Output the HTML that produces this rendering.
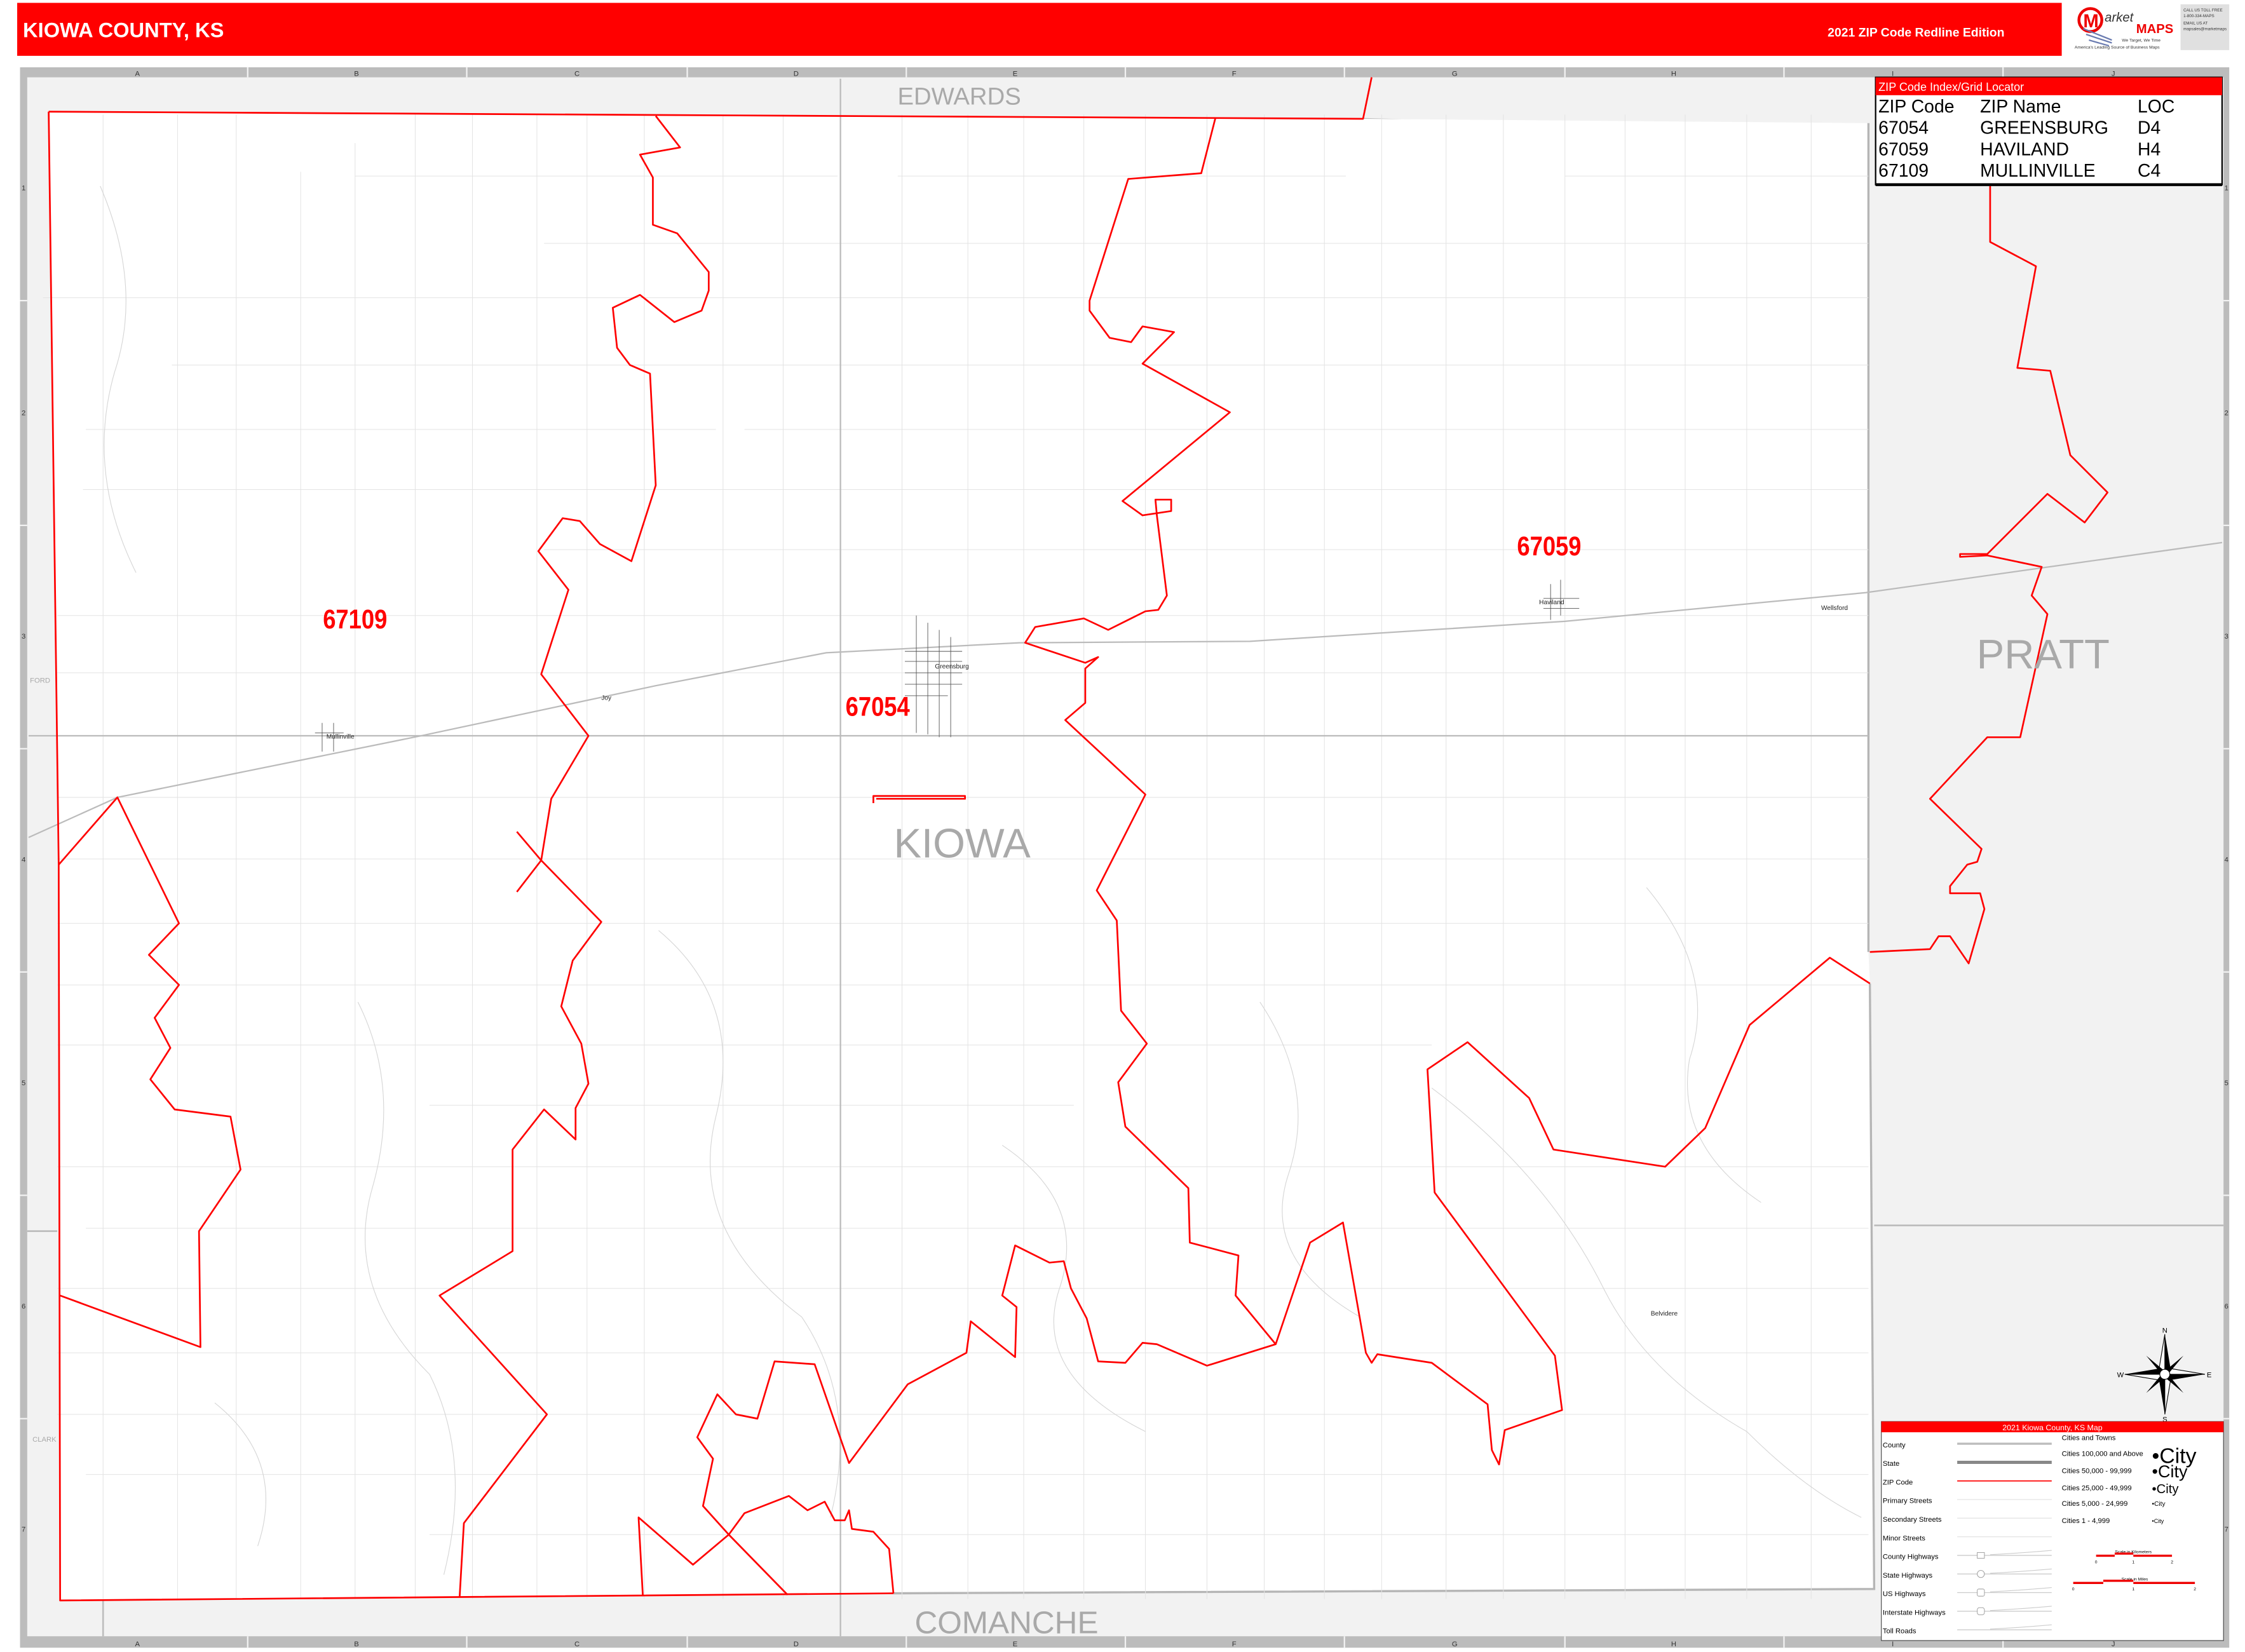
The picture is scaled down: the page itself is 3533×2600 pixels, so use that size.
<!DOCTYPE html>
<html><head><meta charset="utf-8"><style>
html,body{margin:0;padding:0;background:#fff;}
svg{display:block;}
text{font-family:"Liberation Sans",Arial,sans-serif;}
</style></head><body>
<svg width="3533" height="2600" viewBox="0 0 1568 1154" preserveAspectRatio="none" xmlns="http://www.w3.org/2000/svg">
<rect x="0" y="0" width="1568" height="1154" fill="#fff"/>
<rect x="12" y="2" width="1428" height="37" fill="#ff0000"/>
<text x="16" y="26" font-size="14.5" font-weight="bold" fill="#fff">KIOWA COUNTY, KS</text>
<text x="1400" y="25.5" font-size="8.6" font-weight="bold" fill="#fff" text-anchor="end">2021 ZIP Code Redline Edition</text>
<g>
<circle cx="1460" cy="14" r="8" fill="none" stroke="#e00" stroke-width="2"/>
<text x="1455" y="19" font-size="13" font-weight="bold" fill="#e00" font-family="Liberation Serif">M</text>
<text x="1470" y="15" font-size="9" font-style="italic" fill="#333" font-family="Liberation Serif">arket</text>
<text x="1492" y="23" font-size="9" font-weight="bold" fill="#e00">MAPS</text>
<path d="M1455 20 l20 8 M1457 24 l18 6 M1459 28 l14 4" stroke="#6a7bb0" stroke-width="1"/>
<text x="1482" y="29" font-size="3" fill="#333">We Target, We Time</text>
<text x="1449" y="34" font-size="3" fill="#333">America's Leading Source of Business Maps</text>
<rect x="1523" y="3" width="34" height="32" fill="#e0e0e0"/>
<text x="1525" y="8" font-size="2.8" fill="#333">CALL US TOLL FREE</text>
<text x="1525" y="12" font-size="2.8" fill="#333">1-800-334-MAPS</text>
<text x="1525" y="17" font-size="2.8" fill="#333">EMAIL US AT</text>
<text x="1525" y="21" font-size="2.8" fill="#333">mapsales@marketmaps</text>
</g>
<rect x="14" y="47" width="1543" height="1104" fill="#bcbcbc"/>
<rect x="19" y="54" width="1534" height="1089" fill="#f2f2f2"/>
<g font-size="5" fill="#333" text-anchor="middle">
<text x="96" y="53">A</text><text x="249" y="53">B</text><text x="403" y="53">C</text><text x="556" y="53">D</text><text x="709" y="53">E</text><text x="862" y="53">F</text><text x="1016" y="53">G</text><text x="1169" y="53">H</text><text x="1322" y="53">I</text><text x="1476" y="53">J</text>
<text x="96" y="1150">A</text><text x="249" y="1150">B</text><text x="403" y="1150">C</text><text x="556" y="1150">D</text><text x="709" y="1150">E</text><text x="862" y="1150">F</text><text x="1016" y="1150">G</text><text x="1169" y="1150">H</text><text x="1322" y="1150">I</text><text x="1476" y="1150">J</text>
<text x="16.5" y="133">1</text><text x="16.5" y="290">2</text><text x="16.5" y="446">3</text><text x="16.5" y="602">4</text><text x="16.5" y="758">5</text><text x="16.5" y="914">6</text><text x="16.5" y="1070">7</text>
<text x="1555" y="133">1</text><text x="1555" y="290">2</text><text x="1555" y="446">3</text><text x="1555" y="602">4</text><text x="1555" y="758">5</text><text x="1555" y="914">6</text><text x="1555" y="1070">7</text>
</g>
<g stroke="#f2f2f2" stroke-width="1">
<path d="M173 47v7M326 47v7M480 47v7M633 47v7M786 47v7M939 47v7M1093 47v7M1246 47v7M1399 47v7"/>
<path d="M173 1143v8M326 1143v8M480 1143v8M633 1143v8M786 1143v8M939 1143v8M1093 1143v8M1246 1143v8M1399 1143v8"/>
<path d="M14 210h5M14 367h5M14 523h5M14 679h5M14 835h5M14 991h5M1553 210h4M1553 367h4M1553 523h4M1553 679h4M1553 835h4M1553 991h4"/>
</g>
<g stroke="#bdbdbd" stroke-width="1.2" fill="none">
<path d="M19 860H40"/><path d="M1309 856H1553"/><path d="M72 1117V1143"/>
<path d="M952 83 L985 84 L1000 88 L1015 85 L1305 87"/>
</g>
<path d="M34 78 L952 83 L1305 86 L1305 665 L1306 687 L1309 1110 L624 1113 L42 1118 L41 604 Z" fill="#fff"/>
<path d="M1305 86 L1305 665 M1306 687 L1309 1110 L624 1113" stroke="#b5b5b5" stroke-width="1.5" fill="none"/>
<g stroke="#e3e3e3" stroke-width="0.45" fill="none">
<path d="M72 80V1117M124 80V1117M165 80V1117M210 120V1117M248 100V1117M290 80V1117M330 80V1117M375 80V1117M410 80V1117M450 80V1117M505 80V1117M547 80V1117M630 80V1117M676 80V1117M715 80V1117M757 80V1117M800 80V1117M843 80V1117M883 80V1117M925 80V1117M965 80V1117M1010 80V1117M1050 80V1117M1093 80V1117M1135 80V1117M1177 80V1117M1220 80V1117M1265 80V1117"/>
<path d="M248 123H585M627 123H940M1093 123H1305M380 170H1305M30 208H1305M120 255H1305M60 300H500M520 300H1305M58 342H1305M380 384H1305M40 430H1305M40 470H1305M40 557H1305M40 600H1305M40 645H1305M40 688H1305M40 730H1000M300 772H750M40 815H1305M60 858H1305M40 900H1305M40 945H1305M40 988H1305M60 1030H1305M300 1072H1305"/>
</g>
<g stroke="#d6d6d6" stroke-width="0.5" fill="none">
<path d="M70 130 Q100 200 80 260 Q60 330 95 400M250 700 Q280 760 260 830 Q240 900 300 960 Q330 1020 310 1100M460 650 Q520 700 500 780 Q480 860 560 920 Q600 980 580 1060M700 800 Q760 840 740 900 Q720 960 800 1000M1000 760 Q1080 820 1120 900 Q1150 960 1220 1000 Q1260 1040 1300 1060M880 700 Q920 760 900 820 Q880 880 950 920M150 980 Q200 1020 180 1080M1150 620 Q1200 680 1180 740Q1170 800 1230 840"/>
</g>
<g stroke="#bbbbbb" stroke-width="1" fill="none">
<path d="M20 585 L82 557 L294 514 L458 479 L577 456 L712 449 L873 448 L1093 434 L1303 414 L1552 379"/>
<path d="M20 514 H1305"/>
<path d="M587 55 V1143"/>
</g>
<g stroke="#555" stroke-width="0.4">
<path d="M640 430v82M648 435v78M656 440v75M664 445v70M632 455h40M632 462h40M632 470h40M632 478h40M632 486h30M225 505v20M233 505v20M220 512h20M1083 408v25M1090 405v25M1078 418h25M1078 425h25"/>
</g>
<g stroke="#ff0000" stroke-width="1.2" fill="none" stroke-linejoin="round">
<path d="M34 78 L952 83 L958 54"/>
<path d="M34 78 L41 604 L42 1118 L624 1113"/>
<path d="M458 81 L475 103 L447 108 L456 124 L456 157 L473 163 L495 190 L495 203 L490 217 L471 225 L447 206 L428 215 L431 243 L440 255 L454 261 L458 339 L441 392 L419 380 L405 364 L393 362 L376 385 L397 412 L378 471 L411 514 L385 558 L378 601 L420 644 L400 671 L392 703 L406 729 L411 757 L402 774 L402 796 L380 775 L358 803 L358 874 L307 905 L382 988 L324 1064 L321 1116"/>
<path d="M361 581 L378 601 L361 623"/>
<path d="M41 604 L82 557 L125 645 L104 667 L125 688 L108 711 L119 732 L105 754 L122 775 L161 780 L168 817 L139 860 L140 941 L42 905"/>
<path d="M849 82 L839 121 L788 125 L761 210 L761 217 L775 236 L790 239 L798 228 L820 232 L798 254 L859 288 L784 350 L798 360 L818 357 L818 349 L807 349 L808 360 L815 416 L809 426 L800 427 L774 440 L757 432 L723 438 L716 449 L758 463 L767 459 L758 467 L758 491 L744 503 L800 555 L766 622 L780 643 L783 706 L801 729 L781 756 L786 787 L830 830 L831 868 L865 877 L863 905 L891 939 L843 954 L808 939 L798 938 L786 952 L767 951 L759 921 L748 900 L743 881 L733 882 L709 870 L700 905 L710 913 L709 948 L678 923 L675 945 L634 967 L593 1022 L569 953 L541 951 L529 991 L514 988 L501 974 L487 1004 L498 1019 L491 1052 L509 1072 L484 1093 L446 1060 L449 1115"/>
<path d="M509 1072 L520 1057 L551 1045 L564 1055 L576 1049 L583 1062 L590 1062 L593 1055 L595 1068 L610 1070 L621 1082 L624 1113"/>
<path d="M509 1072 L550 1114"/>
<path d="M891 939 L915 868 L938 854 L954 945 L958 952 L962 946 L1000 952 L1039 981 L1042 1013 L1047 1023 L1051 999 L1091 985 L1086 947 L1002 833 L997 747 L1025 728 L1068 767 L1085 803 L1163 815 L1191 788 L1222 716 L1278 669 L1306 687"/>
<path d="M1390 130 L1390 169 L1422 186 L1409 257 L1432 259 L1446 318 L1472 344 L1456 365 L1430 345 L1388 387 L1369 387 L1369 389 L1388 388 L1426 396 L1419 416 L1430 429 L1411 515 L1388 515 L1348 558 L1384 593 L1381 602 L1374 604 L1362 619 L1362 624 L1383 624 L1386 635 L1375 673 L1362 654 L1354 654 L1348 663 L1306 665"/>
<path d="M610 561 L610 556 L674 556 L674 558 L612 558"/>
</g>
<g fill="#ff0000" font-weight="bold" font-size="19">
<text x="248" y="439" text-anchor="middle" transform="translate(248 0) scale(0.85 1) translate(-248 0)">67109</text>
<text x="613" y="500" text-anchor="middle" transform="translate(613 0) scale(0.85 1) translate(-613 0)">67054</text>
<text x="1082" y="388" text-anchor="middle" transform="translate(1082 0) scale(0.85 1) translate(-1082 0)">67059</text>
</g>
<g fill="#a9a9a9" text-anchor="middle">
<text x="670" y="73" font-size="17">EDWARDS</text>
<text x="672" y="599" font-size="29">KIOWA</text>
<text x="1427" y="467" font-size="29">PRATT</text>
<text x="703" y="1141" font-size="22">COMANCHE</text>
<text x="28" y="477" font-size="5">FORD</text>
<text x="31" y="1007" font-size="5">CLARK</text>
</g>
<g fill="#222" font-size="4.5">
<text x="653" y="467">Greensburg</text><text x="228" y="516">Mullinville</text><text x="420" y="489">Joy</text><text x="1075" y="422">Haviland</text><text x="1272" y="426">Wellsford</text><text x="1153" y="919">Belvidere</text>
</g>
<rect x="1310" y="54" width="242" height="75" fill="#fff" stroke="#000" stroke-width="1"/>
<rect x="1310" y="54" width="242" height="12.5" fill="#ff0000"/>
<text x="1312" y="63.5" font-size="8" fill="#fff">ZIP Code Index/Grid Locator</text>
<g font-size="12.6" fill="#000">
<text x="1312" y="78.5">ZIP Code</text><text x="1383" y="78.5">ZIP Name</text><text x="1493" y="78.5">LOC</text>
<text x="1312" y="93.5">67054</text><text x="1383" y="93.5">GREENSBURG</text><text x="1493" y="93.5">D4</text>
<text x="1312" y="108.5">67059</text><text x="1383" y="108.5">HAVILAND</text><text x="1493" y="108.5">H4</text>
<text x="1312" y="123.5">67109</text><text x="1383" y="123.5">MULLINVILLE</text><text x="1493" y="123.5">C4</text>
</g>
<rect x="1310" y="128" width="242" height="2" fill="#000"/>
<g transform="translate(1512 960)">
<polygon points="0,-28 4,-4 0,0" fill="#000"/><polygon points="0,-28 -4,-4 0,0" fill="#fff" stroke="#000" stroke-width="0.5"/>
<polygon points="0,28 -4,4 0,0" fill="#000"/><polygon points="0,28 4,4 0,0" fill="#fff" stroke="#000" stroke-width="0.5"/>
<polygon points="28,0 4,4 0,0" fill="#000"/><polygon points="28,0 4,-4 0,0" fill="#fff" stroke="#000" stroke-width="0.5"/>
<polygon points="-28,0 -4,-4 0,0" fill="#000"/><polygon points="-28,0 -4,4 0,0" fill="#fff" stroke="#000" stroke-width="0.5"/>
<polygon points="13,-13 3,-1 1,-3" fill="#000"/><polygon points="-13,13 -3,1 -1,3" fill="#000"/>
<polygon points="-13,-13 -1,-3 -3,-1" fill="#000"/><polygon points="13,13 1,3 3,1" fill="#000"/>
<circle r="3.5" fill="#fff" stroke="#000" stroke-width="0.5"/>
<g font-size="5" text-anchor="middle" fill="#000"><text y="-29">N</text><text y="33">S</text><text x="31" y="2">E</text><text x="-31" y="2">W</text></g>
</g>
<rect x="1314" y="993" width="239" height="153" fill="#fff" stroke="#444" stroke-width="0.5"/>
<rect x="1314" y="993" width="239" height="7.5" fill="#ff0000"/>
<text x="1433.5" y="999" font-size="5.5" fill="#fff" text-anchor="middle">2021 Kiowa County, KS Map</text>
<g font-size="5" fill="#000">
<text x="1315" y="1011">County</text><text x="1315" y="1024">State</text><text x="1315" y="1037">ZIP Code</text><text x="1315" y="1050">Primary Streets</text><text x="1315" y="1063">Secondary Streets</text><text x="1315" y="1076">Minor Streets</text><text x="1315" y="1089">County Highways</text><text x="1315" y="1102">State Highways</text><text x="1315" y="1115">US Highways</text><text x="1315" y="1128">Interstate Highways</text><text x="1315" y="1141">Toll Roads</text>
<text x="1440" y="1006">Cities and Towns</text>
<text x="1440" y="1017">Cities 100,000 and Above</text><text x="1440" y="1029">Cities 50,000 - 99,999</text><text x="1440" y="1041">Cities 25,000 - 49,999</text><text x="1440" y="1052">Cities 5,000 - 24,999</text><text x="1440" y="1064">Cities 1 - 4,999</text>
<text x="1503" y="1022" font-size="15">•City</text><text x="1503" y="1032" font-size="12">•City</text><text x="1503" y="1043" font-size="9">•City</text><text x="1503" y="1052" font-size="4.5">•City</text><text x="1503" y="1064" font-size="4">•City</text>
</g>
<g fill="none">
<path d="M1367 1008.5H1433" stroke="#bdbdbd" stroke-width="1.5"/>
<path d="M1367 1021.5H1433" stroke="#888" stroke-width="2.2"/>
<path d="M1367 1034.5H1433" stroke="#ff0000" stroke-width="0.8"/>
<path d="M1367 1047.5H1433M1367 1060.5H1433M1367 1073.5H1433" stroke="#e0e0e0" stroke-width="0.5"/>
<path d="M1367 1086.5H1433M1367 1099.5H1433M1367 1112.5H1433M1367 1125.5H1433M1367 1138.5H1433" stroke="#ccc" stroke-width="0.6"/>
<path d="M1390 1086 Q1410 1085 1433 1083M1390 1099 Q1410 1098 1433 1096M1390 1112 Q1410 1111 1433 1109M1390 1125 Q1410 1124 1433 1122M1390 1138 Q1410 1137 1433 1135" stroke="#ccc" stroke-width="0.5"/>
</g>
<g stroke="#999" stroke-width="0.4" fill="#fff"><rect x="1381" y="1084.5" width="5" height="4"/><circle cx="1383.5" cy="1099.5" r="2.5"/><rect x="1381" y="1110" width="5" height="5" rx="1"/><rect x="1381" y="1123" width="5" height="5" rx="1.5"/></g>
<g font-size="3" fill="#000" text-anchor="middle">
<text x="1490" y="1085">Scale in Kilometers</text>
<text x="1491" y="1104">Scale in Miles</text>
<text x="1464" y="1092">0</text><text x="1490" y="1092">1</text><text x="1517" y="1092">2</text>
<text x="1448" y="1111">0</text><text x="1490" y="1111">1</text><text x="1533" y="1111">2</text>
</g>
<g fill="#e00"><rect x="1464" y="1086" width="13" height="1.5"/><rect x="1477" y="1084.5" width="13" height="1.5"/><rect x="1490" y="1086" width="27" height="1.5"/>
<rect x="1448" y="1105" width="21" height="1.5"/><rect x="1469" y="1103.5" width="21" height="1.5"/><rect x="1490" y="1105" width="43" height="1.5"/></g>
</svg>
</body></html>
